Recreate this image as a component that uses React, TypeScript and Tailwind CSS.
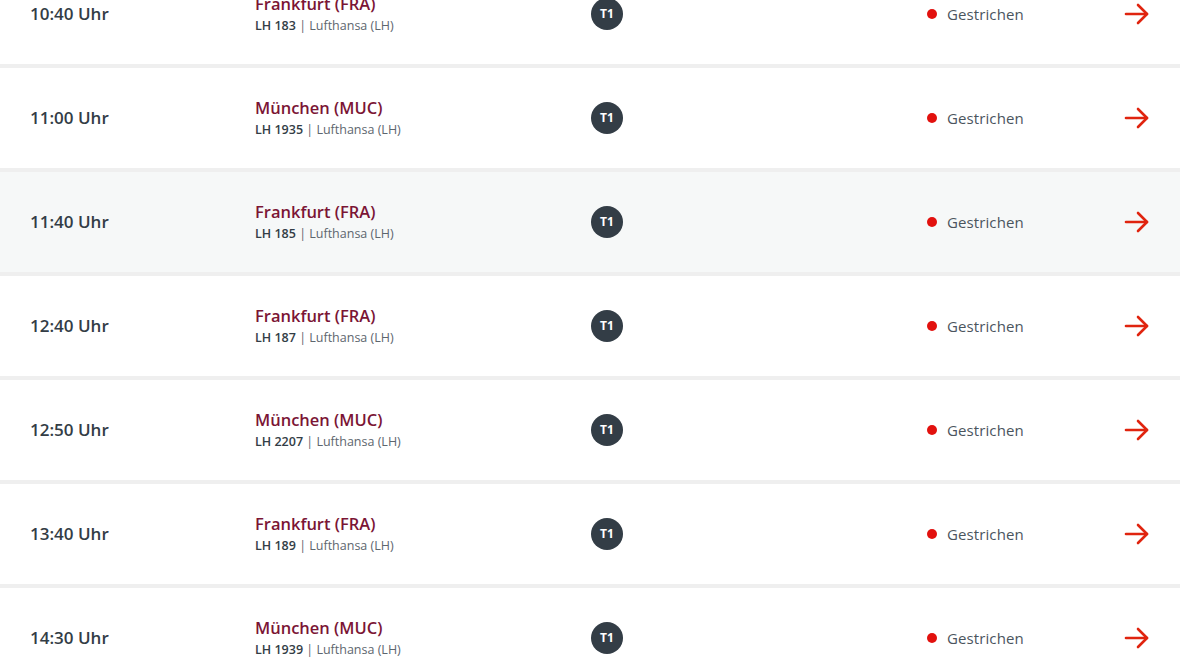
import React from "react"

const flights = [
  { time: "10:40 Uhr", dest: "Frankfurt (FRA)", no: "LH 183" },
  { time: "11:00 Uhr", dest: "München (MUC)", no: "LH 1935" },
  { time: "11:40 Uhr", dest: "Frankfurt (FRA)", no: "LH 185", highlight: true },
  { time: "12:40 Uhr", dest: "Frankfurt (FRA)", no: "LH 187" },
  { time: "12:50 Uhr", dest: "München (MUC)", no: "LH 2207" },
  { time: "13:40 Uhr", dest: "Frankfurt (FRA)", no: "LH 189" },
  { time: "14:30 Uhr", dest: "München (MUC)", no: "LH 1939" },
]

function Arrow() {
  return (
    <svg width="26" height="24" viewBox="0 0 26 24" fill="none" stroke="#e0240f" strokeWidth="2.6" strokeLinecap="round" strokeLinejoin="round">
      <path d="M2 12h21" />
      <path d="M14 3l9 9-9 9" />
    </svg>
  )
}

export default function App() {
  return (
    <div className="h-[664px] overflow-hidden bg-[#efefef] font-['Open_Sans','Noto_Sans',sans-serif]">
      <div className="-mt-[36px] flex flex-col gap-[4px]">
        {flights.map((f, i) => (
          <div
            key={i}
            className={`grid h-[100px] grid-cols-[225px_336px_336px_1fr_auto] items-center pl-[30px] pr-[30px] ${f.highlight ? "bg-[#f6f8f8]" : "bg-white"}`}
          >
            <div className="text-[17px] font-semibold text-[#333d46]">{f.time}</div>
            <div className="flex flex-col">
              <span className="text-[16.5px] font-semibold leading-[22px] text-[#7b1535]">{f.dest}</span>
              <span className="mt-[2px] text-[12.5px] leading-[18px] text-[#5d666e]">
                <span className="font-semibold text-[#333d46]">{f.no}</span> | Lufthansa (LH)
              </span>
            </div>
            <div>
              <div className="flex h-[32px] w-[32px] items-center justify-center rounded-full bg-[#333d46] text-[12px] font-bold text-white">
                T1
              </div>
            </div>
            <div className="flex items-center gap-[10px]">
              <span className="h-[10px] w-[10px] rounded-full bg-[#e2110e]" />
              <span className="text-[15px] tracking-[0.1px] text-[#4b555e]">Gestrichen</span>
            </div>
            <div className="flex items-center">
              <Arrow />
            </div>
          </div>
        ))}
      </div>
    </div>
  )
}
